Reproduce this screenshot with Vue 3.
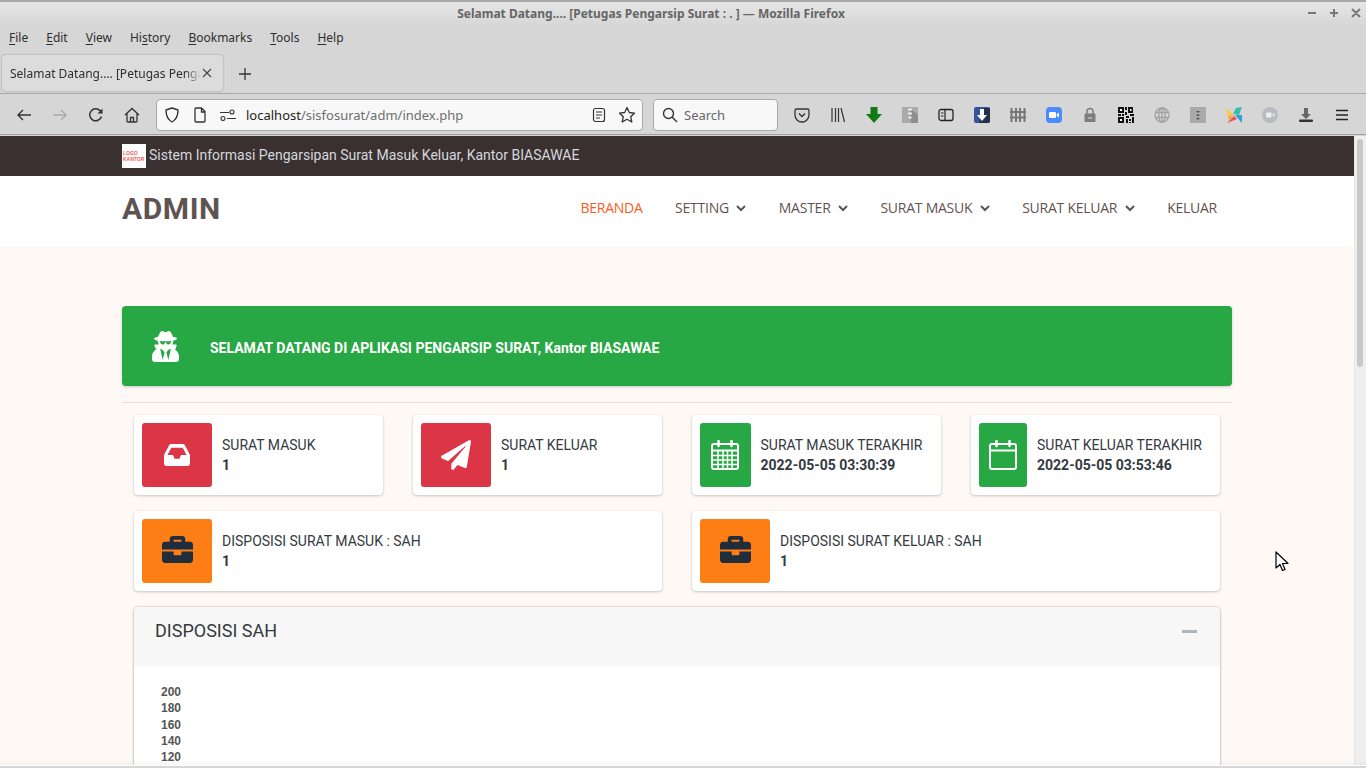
<template>
  <div class="window">
    <header class="chrome">
      <div class="titlebar">
        <span class="title">Selamat Datang.... [Petugas Pengarsip Surat : . ] — Mozilla Firefox</span>
        <div class="winbtns">
          <svg width="70" height="14" viewBox="0 0 70 14"><g stroke="#777" stroke-width="2" fill="none"><path d="M12 7h8M34 7h8M38 3v8M56 3l8 8M64 3l-8 8"/></g></svg>
        </div>
      </div>
      <nav class="menubar">
        <span v-for="m in menus" :key="m.label" class="menu">{{ m.pre }}<u>{{ m.first }}</u>{{ m.rest }}</span>
      </nav>
      <div class="tabbar">
        <div class="tab">
          <span class="tabtext">Selamat Datang.... [Petugas Penga</span>
          <svg class="tabclose" width="10" height="10" viewBox="0 0 10 10"><path d="M1 1l8 8M9 1l-8 8" stroke="#444" stroke-width="1.1"/></svg>
        </div>
        <svg class="newtab" width="14" height="14" viewBox="0 0 14 14"><path d="M7 1v12M1 7h12" stroke="#333" stroke-width="1.3"/></svg>
      </div>
      <div class="toolbar">
        <div class="navbtns">
          <svg width="16" height="16" viewBox="0 0 16 16"><path d="M15 8H2M7 3L2 8l5 5" fill="none" stroke="#333" stroke-width="1.4"/></svg>
          <svg width="16" height="16" viewBox="0 0 16 16"><path d="M1 8h13M9 3l5 5-5 5" fill="none" stroke="#aaa" stroke-width="1.4"/></svg>
          <svg width="16" height="16" viewBox="0 0 16 16"><path d="M13.500 9.500A6 6 0 1 1 12 3.600L14 6" fill="none" stroke="#333" stroke-width="1.5"/><path d="M14.500 1.500v5h-5z" fill="#333"/></svg>
          <svg width="16" height="16" viewBox="0 0 16 16"><path d="M1 8l7-6.500L15 8M3 6.500V14a1 1 0 0 0 1 1h8a1 1 0 0 0 1-1V6.500M6.500 15v-4.500h3V15" fill="none" stroke="#333" stroke-width="1.3"/></svg>
        </div>
        <div class="urlbar">
          <svg class="u-shield" width="16" height="16" viewBox="0 0 16 16"><path d="M8 1l6 2c0 6-1.500 9.500-6 12C3.500 12.500 2 9 2 3z" fill="none" stroke="#333" stroke-width="1.4" stroke-linejoin="round"/></svg>
          <svg class="u-page" width="14" height="16" viewBox="0 0 14 16"><path d="M3 1h5.500L12 4.500V14a1 1 0 0 1-1 1H3a1 1 0 0 1-1-1V2a1 1 0 0 1 1-1zM8.500 1v4H12" fill="none" stroke="#333" stroke-width="1.3"/></svg>
          <svg class="u-perm" width="16" height="12" viewBox="0 0 16 12"><path d="M0 3.500h9M7 9.500h9" stroke="#333" stroke-width="1.2"/><circle cx="12" cy="3" r="2" fill="none" stroke="#333" stroke-width="1.1"/><circle cx="3" cy="9.500" r="2" fill="none" stroke="#333" stroke-width="1.1"/></svg>
          <span class="url"><span class="host">localhost</span>/sisfosurat/adm/index.php</span>
          <svg class="u-reader" width="14" height="16" viewBox="0 0 14 16"><rect x="1.500" y="1.500" width="11" height="13" rx="2" fill="none" stroke="#333" stroke-width="1.2"/><path d="M4 5h6M4 8h6M4 11h4" stroke="#333" stroke-width="1.2"/></svg>
          <svg class="u-star" width="18" height="18" viewBox="0 0 18 18"><path d="M9 1.500l2.300 5 5.300.6-3.900 3.600 1.100 5.300L9 13.300 4.200 16l1.100-5.300L1.400 7.100l5.300-.6z" fill="none" stroke="#333" stroke-width="1.3" stroke-linejoin="round"/></svg>
        </div>
        <div class="searchbar">
          <svg width="16" height="16" viewBox="0 0 16 16"><circle cx="6.500" cy="6.500" r="5" fill="none" stroke="#333" stroke-width="1.4"/><path d="M10 10l5 5" stroke="#333" stroke-width="1.4"/></svg>
          <span>Search</span>
        </div>
        <div class="tools">
          <svg width="16" height="16" viewBox="0 0 16 16"><path d="M2.500 2h11A1.500 1.500 0 0 1 15 3.500V8a7 7 0 0 1-14 0V3.500A1.500 1.500 0 0 1 2.500 2z" fill="none" stroke="#333" stroke-width="1.3"/><path d="M5 6.500l3 3 3-3" fill="none" stroke="#333" stroke-width="1.4"/></svg>
          <svg width="16" height="16" viewBox="0 0 16 16"><path d="M2 1v14M5.500 1v14M8.500 1v14M11 1l3.500 14" stroke="#333" stroke-width="1.2" fill="none"/></svg>
          <svg width="16" height="16" viewBox="0 0 16 16"><path d="M4.500 0h7v7H16l-8 9-8-9h4.500z" fill="#117a11"/></svg>
          <svg width="16" height="16" viewBox="0 0 16 16"><rect width="16" height="16" fill="#aaa"/><path d="M8 1l8 7v8H9z" fill="#8e8e8e"/><path d="M6 2.500h4M6 6.500h4M6.500 10.500h3" stroke="#eee" stroke-width="2"/></svg>
          <svg width="16" height="16" viewBox="0 0 16 16"><rect x="1" y="2.500" width="14" height="11" rx="2" fill="none" stroke="#222" stroke-width="1.3"/><path d="M7 2.500v11M3 6h2.500M3 9h2.500" stroke="#222" stroke-width="1.2"/></svg>
          <svg width="16" height="16" viewBox="0 0 16 16"><rect width="16" height="16" rx="2" fill="#34539c"/><path d="M10 1h6v13a2 2 0 0 1-2 2H5z" fill="#232f4b"/><path d="M6 2h4v6h3l-5 6-5-6h3z" fill="#fff"/></svg>
          <svg width="16" height="16" viewBox="0 0 16 16"><path d="M0 5h16M0 10.500h16" stroke="#777" stroke-width="2"/><path d="M1.500 1v14M6 1v14M10 1v14M14.500 1v14" stroke="#777" stroke-width="2"/></svg>
          <svg width="16" height="16" viewBox="0 0 16 16"><rect width="16" height="16" rx="4" fill="#4a8cff"/><rect x="3" y="5" width="7" height="6" rx="1" fill="#fff"/><path d="M10.500 7.500L13 5.500v5l-2.500-2z" fill="#fff"/></svg>
          <svg width="16" height="16" viewBox="0 0 16 16"><rect x="2.500" y="6.500" width="11" height="8.500" rx="1" fill="#7e7e7e"/><path d="M5 7V4.500a3 3 0 0 1 6 0V7" fill="none" stroke="#7e7e7e" stroke-width="1.500"/><path d="M6 11h4" stroke="#ddd"/></svg>
          <svg width="16" height="16" viewBox="0 0 16 16"><g fill="#111"><path d="M0 0h6v6H0zM10 0h5v6h-5zM0 10h6v6H0z"/><path d="M7 0h2v3H7zM7 5h2v3H7zM0 7h3v2H0zM4 7h2v2H4zM8 9h3v2H8zM12 7h4v2h-4zM8 12h2v4H8zM11 12h2v2h-2zM14 10h2v6h-2zM11 15h2v1h-2z"/></g><path d="M2 2h2v2H2zM12 2h1.500v2H12zM2 12h2v2H2z" fill="#fff"/></svg>
          <svg width="16" height="16" viewBox="0 0 16 16"><g fill="none" stroke="#a2a2a2" stroke-width="1.300"><circle cx="8" cy="8" r="7"/><ellipse cx="8" cy="8" rx="3.200" ry="7"/><path d="M1 5.500h14M1 10.500h14M8 1v14"/></g></svg>
          <svg width="16" height="16" viewBox="0 0 16 16"><rect width="16" height="16" fill="#aaa"/><path d="M6 4h4L8 6zM6 7.500h4l-2 2zM6 11h4l-2 2z" fill="#555"/></svg>
          <svg width="16" height="16" viewBox="0 0 16 16"><path d="M0 1l8 7-6 2z" fill="#f7c948"/><path d="M7 7l3-6 6-1-3 8z" fill="#38bfa7"/><path d="M9 8h7v8z" fill="#2f9fe0"/><path d="M8 9l3 3-10 4z" fill="#ee4e4e"/><path d="M2 10l6-2-5 5z" fill="#f59b3c"/></svg>
          <svg width="16" height="16" viewBox="0 0 16 16"><circle cx="8" cy="8" r="8" fill="#b9bbc0"/><rect x="4" y="5.500" width="5.500" height="5" rx="1" fill="#eee"/><path d="M10 8l2.500-2v4z" fill="#eee"/></svg>
          <svg width="16" height="16" viewBox="0 0 16 16"><path d="M6 1h4v6h3l-5 5-5-5h3z" fill="#666"/><rect x="1" y="12.500" width="14" height="2.500" rx="1" fill="#333"/></svg>
          <svg width="16" height="16" viewBox="0 0 16 16"><path d="M2 3.500h12M2 8h12M2 12.500h12" stroke="#222" stroke-width="1.400"/></svg>
        </div>
      </div>
    </header>

    <div class="viewport">
      <div class="page">
        <div class="topbar">
          <div class="container topbar-in">
            <div class="logo"><span>LOGO</span><span>KANTOR</span></div>
            <span class="sitename">Sistem Informasi Pengarsipan Surat Masuk Keluar, Kantor BIASAWAE</span>
          </div>
        </div>
        <div class="navbar">
          <div class="container navbar-in">
            <h1 class="brand">ADMIN</h1>
            <ul class="navlinks">
              <li v-for="n in navs" :key="n.label" :class="{ active: n.active }">
                {{ n.label }}
                <svg v-if="n.caret" class="caret" width="10" height="7" viewBox="0 0 10 7"><path d="M1 1l4 4 4-4" fill="none" stroke="#5f5350" stroke-width="2"/></svg>
              </li>
            </ul>
          </div>
        </div>
        <main class="container main">
          <div class="alert">
            <svg class="secret" width="27" height="31" viewBox="0 0 448 512"><path fill="#fff" d="M383.900 308.300l23.900-62.600c4-10.500-3.700-21.700-15-21.700h-58.500c11-18.900 17.800-40.600 17.800-64v-.3c39.200-7.800 64-19.100 64-31.700 0-13.300-27.300-25.100-70.100-33-9.200-32.800-27-65.800-40.600-82.800-9.500-11.900-25.900-15.600-39.500-8.800l-27.600 13.800c-9 4.500-19.600 4.500-28.600 0L182.100 3.400c-13.600-6.800-30-3.100-39.500 8.800-13.500 17-31.400 50-40.600 82.800-42.700 7.900-70 19.700-70 33 0 12.600 24.800 23.900 64 31.700v.3c0 23.400 6.800 45.100 17.800 64H56.300c-11.500 0-19.200 11.700-14.700 22.300l25.800 60.200C27.300 329.800 0 372.700 0 422.400v44.800C0 491.900 20.100 512 44.800 512h358.400c24.700 0 44.800-20.100 44.800-44.800v-44.800c0-48.400-25.800-90.400-64.100-114.100zM176 480l-41.600-192 49.600 32 24 40-32 120zm96 0l-32-120 24-40 49.600-32L272 480zm41.700-298.500c-3.900 11.900-7 24.600-16.500 33.400-10.100 9.300-48 22.400-64-25-2.800-8.400-15.400-8.400-18.300 0-17 50.200-56 32.400-64 25-9.500-8.800-12.700-21.500-16.500-33.400-.8-2.500-6.300-5.700-6.300-5.800v-10.800c28.300 3.600 61 5.800 96 5.800s67.700-2.100 96-5.800v10.800c-.1.100-5.600 3.200-6.400 5.800z"/></svg>
            <b>SELAMAT DATANG DI APLIKASI PENGARSIP SURAT, Kantor BIASAWAE</b>
          </div>
          <div class="rule"></div>
          <div class="boxes">
            <div class="box">
              <div class="ico red"><svg width="26" height="22" viewBox="0 64 576 384" preserveAspectRatio="none"><path fill="#fff" d="M567.938 243.908L462.250 85.374A48.003 48.003 0 0 0 422.311 64H153.689a48 48 0 0 0-39.938 21.374L8.062 243.908A47.994 47.994 0 0 0 0 270.533V400c0 26.510 21.490 48 48 48h480c26.510 0 48-21.490 48-48V270.533a47.994 47.994 0 0 0-8.062-26.625zM162.252 128h251.497l85.333 128H376l-32 64H232l-32-64H76.918l85.334-128z"/></svg></div>
              <div class="txt"><span>SURAT MASUK</span><b>1</b></div>
            </div>
            <div class="box">
              <div class="ico red"><svg width="30" height="30" viewBox="0 0 512 512"><path fill="#fff" d="M476 3.200L12.500 270.600c-18.100 10.400-15.800 35.600 2.200 43.200L121 358.400l287.300-253.200c5.500-4.900 13.300 2.600 8.600 8.300L176 407v80.500c0 23.600 28.500 32.900 42.500 15.800L282 426l124.600 52.200c14.200 6 30.400-2.900 33-18.200l72-432C515 7.800 493.300-6.800 476 3.200z"/></svg></div>
              <div class="txt"><span>SURAT KELUAR</span><b>1</b></div>
            </div>
            <div class="box">
              <div class="ico green w51"><svg width="28" height="30" viewBox="0 0 28 30"><g fill="none" stroke="#fff"><rect x="1" y="4" width="26" height="25" rx="2" stroke-width="2"/><path d="M1 10.500h26" stroke-width="2"/><path d="M2 15.500h24M2 20h24M2 24.500h24M7 11v17M12 11v17M16.500 11v17M21 11v17" stroke-width="1.500"/><path d="M7.500 1v5M20.500 1v5" stroke-width="2.500" stroke-linecap="round"/></g></svg></div>
              <div class="txt"><span>SURAT MASUK TERAKHIR</span><b>2022-05-05 03:30:39</b></div>
            </div>
            <div class="box">
              <div class="ico green w48"><svg width="28" height="30" viewBox="0 0 28 30"><g fill="none" stroke="#fff" stroke-width="2"><rect x="1" y="4" width="26" height="25" rx="2"/><path d="M1 10.500h26"/><path d="M7.500 1v5M20.500 1v5" stroke-width="2.500" stroke-linecap="round"/></g></svg></div>
              <div class="txt"><span>SURAT KELUAR TERAKHIR</span><b>2022-05-05 03:53:46</b></div>
            </div>
            <div v-for="d in dispositions" :key="d" class="box wide">
              <div class="ico orange"><svg class="case" width="31" height="27" viewBox="0 32 512 448" preserveAspectRatio="none"><path fill="#1f2d3d" d="M320 336c0 8.840-7.160 16-16 16h-96c-8.840 0-16-7.160-16-16v-48H0v144c0 25.600 22.400 48 48 48h416c25.600 0 48-22.400 48-48V288H320v48zm144-208h-80V80c0-25.600-22.400-48-48-48H176c-25.600 0-48 22.400-48 48v48H48c-25.600 0-48 22.400-48 48v80h512v-80c0-25.600-22.400-48-48-48zm-144 0H192V96h128v32z"/></svg></div>
              <div class="txt"><span>{{ d }}</span><b>1</b></div>
            </div>
          </div>
          <section class="panel">
            <div class="panel-head">
              <h3>DISPOSISI SAH</h3>
              <span class="collapse"></span>
            </div>
            <div class="panel-body">
              <div v-for="t in ticks" :key="t" class="tick">{{ t }}</div>
            </div>
          </section>
        </main>
      </div>
      <div class="scrollbar"><div class="thumb"></div></div>
      <svg class="cursor" width="14" height="21" viewBox="0 0 14 21"><path d="M1 1v16l4-3.500 2.500 6 2.500-1-2.500-6H13z" fill="#fff" stroke="#000" stroke-width="1.200" stroke-linejoin="round"/></svg>
    </div>
    <div class="bottomedge"></div>
  </div>
</template>

<script setup>
const menus = [
  { label: "File", pre: "", first: "F", rest: "ile" },
  { label: "Edit", pre: "", first: "E", rest: "dit" },
  { label: "View", pre: "", first: "V", rest: "iew" },
  { label: "History", pre: "Hi", first: "s", rest: "tory" },
  { label: "Bookmarks", pre: "", first: "B", rest: "ookmarks" },
  { label: "Tools", pre: "", first: "T", rest: "ools" },
  { label: "Help", pre: "", first: "H", rest: "elp" },
];
const navs = [
  { label: "BERANDA", active: true },
  { label: "SETTING", caret: true },
  { label: "MASTER", caret: true },
  { label: "SURAT MASUK", caret: true },
  { label: "SURAT KELUAR", caret: true },
  { label: "KELUAR" },
];
const dispositions = ["DISPOSISI SURAT MASUK : SAH", "DISPOSISI SURAT KELUAR : SAH"];
const ticks = [200, 180, 160, 140, 120];
</script>

<style>
html,
body {
  margin: 0;
  overflow: hidden;
}
</style>

<style scoped>
.window {
  width: 1366px;
  height: 768px;
  display: flex;
  flex-direction: column;
  overflow: hidden;
  background: #fff;
  position: relative;
}
.chrome {
  height: 136px;
  flex: none;
  background: #d6d6d6;
  font-family: "Noto Sans", sans-serif;
  color: #2e2e2e;
  font-size: 13px;
}
.titlebar {
  height: 26px;
  box-sizing: border-box;
  border-top: 2px solid #a8a8a8;
  background: linear-gradient(#e6e6e6, #d6d6d6);
  display: flex;
  justify-content: center;
  align-items: center;
  position: relative;
  padding: 0 64px 2px 0;
}
.title {
  font-weight: 700;
  font-size: 12px;
  color: #666;
}
.winbtns {
  position: absolute;
  right: 0;
  top: 4px;
  line-height: 0;
}
.menubar {
  height: 24px;
  display: flex;
  padding: 0 0 1px 9px;
  box-sizing: border-box;
  gap: 18px;
  align-items: center;
  font-size: 12px;
}
.menu u {
  text-underline-offset: 2px;
}
.tabbar {
  height: 44px;
  display: flex;
  align-items: flex-start;
  padding-top: 5px;
  box-sizing: border-box;
  border-bottom: 1px solid #a9a9a9;
}
.tab {
  width: 221px;
  height: 36px;
  margin-left: 2px;
  box-sizing: border-box;
  background: #dcdcdc;
  border-radius: 4px;
  box-shadow: 0 0 2px rgba(0, 0, 0, 0.35);
  display: flex;
  align-items: center;
  padding-left: 8px;
  font-size: 12px;
}
.tabtext {
  width: 191px;
  flex: none;
  white-space: nowrap;
  -webkit-mask-image: linear-gradient(90deg, #000 175px, transparent 191px);
  mask-image: linear-gradient(90deg, #000 175px, transparent 191px);
}
.tabclose {
  margin-left: 1px;
}
.newtab {
  margin: 12px 0 0 15px;
}
.toolbar {
  height: 41px;
  box-sizing: border-box;
  border-bottom: 1px solid #a0a0a0;
  display: flex;
  align-items: center;
  padding: 1px 0 0 16px;
}
.navbtns {
  display: flex;
  gap: 20px;
  width: 140px;
  flex: none;
}
.urlbar,
.searchbar {
  height: 32px;
  box-sizing: border-box;
  background: #f8f8f8;
  border: 1px solid #a8a8a8;
  border-radius: 4px;
  display: flex;
  align-items: center;
}
.urlbar {
  width: 487px;
  padding-left: 7px;
}
.u-page {
  margin-left: 13px;
}
.u-perm {
  margin-left: 13px;
}
.url {
  margin-left: 10px;
  width: 346px;
  color: #6e6e6e;
}
.host {
  color: #222;
}
.u-star {
  margin-left: 12px;
}
.searchbar {
  margin-left: 10px;
  width: 125px;
  padding-left: 8px;
  gap: 6px;
  color: #666;
}
.tools {
  display: flex;
  gap: 20px;
  margin-left: 16px;
}
.viewport {
  flex: 1;
  min-height: 0;
  display: flex;
  position: relative;
  overflow: hidden;
}
.page {
  flex: 1;
  min-width: 0;
  background: #fff9f5;
  font-family: Roboto, sans-serif;
  overflow: hidden;
}
.scrollbar {
  width: 12px;
  flex: none;
  box-sizing: border-box;
  background: #efefef;
  border-left: 1px solid #e6e6e6;
  padding: 3px 0 0 2px;
}
.thumb {
  width: 6px;
  height: 228px;
  background: #c8c8c8;
  border-radius: 3px;
}
.cursor {
  position: absolute;
  left: 1275px;
  top: 415px;
}
.bottomedge {
  position: absolute;
  left: 0;
  right: 0;
  top: 760px;
  height: 8px;
  background: linear-gradient(rgba(0, 0, 0, 0), rgba(0, 0, 0, 0.035) 5px, #fff 5px, #fff 6px, #d6d6d6 6px);
}
.container {
  width: 1110px;
  margin: 0 auto;
}
.topbar {
  height: 40px;
  background: #3a3030;
  color: #d2d8de;
  font-size: 14px;
}
.topbar-in {
  height: 100%;
  display: flex;
  align-items: center;
  gap: 3px;
}
.sitename {
  position: relative;
  top: -1px;
}
.logo {
  width: 24px;
  height: 24px;
  background: #fff;
  color: #f45a5a;
  font-family: "Liberation Sans", sans-serif;
  font-weight: 700;
  font-size: 5px;
  line-height: 6px;
  display: flex;
  flex-direction: column;
  justify-content: center;
  padding-left: 1px;
  box-sizing: border-box;
}
.navbar {
  height: 70px;
  background: #fff;
}
.navbar-in {
  height: 100%;
  box-sizing: border-box;
  padding-bottom: 6px;
  display: flex;
  align-items: center;
  justify-content: space-between;
}
.brand {
  margin: 0;
  font-size: 30px;
  font-weight: 700;
  color: #5f5350;
  letter-spacing: 0.6px;
}
.navlinks {
  list-style: none;
  margin: 0 0 2px;
  padding: 0 15px 0 0;
  display: flex;
  gap: 32.500px;
  font-family: "Open Sans", sans-serif;
  font-size: 14px;
  letter-spacing: -0.25px;
  color: #5f5350;
}
.navlinks .active {
  color: #fb5b21;
}
.caret {
  margin-left: 4px;
  vertical-align: 1px;
}
.main {
  padding-top: 60px;
}
.alert {
  height: 80px;
  background: #28a745;
  border-radius: 4px;
  box-shadow: 0 1px 3px rgba(0, 0, 0, 0.2);
  color: #fff;
  display: flex;
  align-items: center;
  font-size: 14px;
}
.secret {
  margin-left: 30px;
  margin-right: 31px;
}
.alert b {
  font-weight: 700;
  position: relative;
  top: 2px;
}
.rule {
  height: 1px;
  margin-top: 16px;
  background: #e2dfe0;
}
.boxes {
  display: grid;
  grid-template-columns: repeat(4, 249px);
  gap: 16px 30px;
  margin: 12px 12px 0;
}
.box {
  height: 80px;
  box-sizing: border-box;
  padding: 8px;
  background: #fff;
  border-radius: 4px;
  box-shadow: 0 0 1px rgba(0, 0, 0, 0.13), 0 1px 3px rgba(0, 0, 0, 0.2);
  display: flex;
  align-items: center;
  color: #343a40;
}
.wide {
  grid-column: span 2;
}
.ico {
  width: 70px;
  height: 64px;
  flex: none;
  border-radius: 3px;
  display: flex;
  align-items: center;
  justify-content: center;
}
.case {
  margin-bottom: 3px;
}
.w51 {
  width: 50.500px;
}
.w48 {
  width: 48px;
}
.red {
  background: #dc3545;
}
.green {
  background: #28a745;
}
.orange {
  background: #fd7e14;
}
.txt {
  padding-left: 10px;
  display: flex;
  flex-direction: column;
  font-size: 14px;
  line-height: 20px;
  white-space: nowrap;
}
.txt b {
  font-weight: 700;
}
.panel {
  margin: 16px 12px 0;
  background: #fff;
  border-radius: 4px;
  box-shadow: 0 0 2px rgba(0, 0, 0, 0.3), 0 1px 3px rgba(0, 0, 0, 0.2);
}
.panel-head {
  height: 59px;
  background: #f7f7f7;
  padding: 12px 21px 0;
  box-sizing: border-box;
  display: flex;
  justify-content: space-between;
  align-items: flex-start;
  border-radius: 4px 4px 0 0;
}
.panel-head h3 {
  margin: 0;
  font-size: 18px;
  font-weight: 400;
  line-height: 24px;
  color: #343a40;
}
.collapse {
  width: 15px;
  height: 3px;
  margin-top: 11px;
  margin-right: 2px;
  background: #adb5bd;
}
.panel-body {
  padding: 18px 27px 0;
  height: 200px;
}
.tick {
  font-family: "Liberation Sans", sans-serif;
  font-weight: 700;
  font-size: 12px;
  line-height: 16.300px;
  color: #555;
}
</style>
